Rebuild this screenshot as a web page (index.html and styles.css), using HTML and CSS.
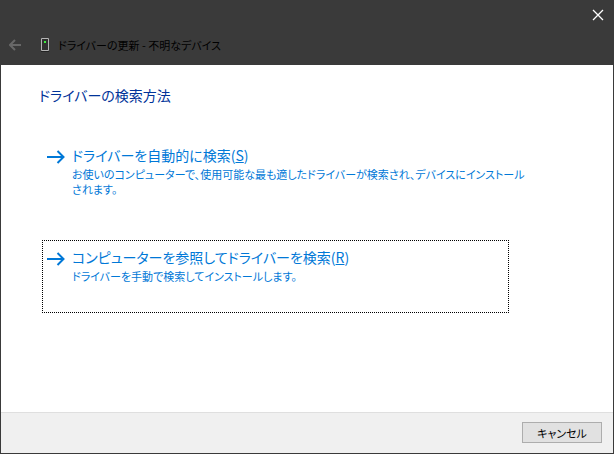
FILE: index.html
```html
<!DOCTYPE html>
<html lang="ja">
<head>
<meta charset="utf-8">
<meta name="viewport" content="width=device-width, initial-scale=1">
<title>ドライバーの更新 - 不明なデバイス</title>
<link rel="stylesheet" href="styles.css">
</head>
<body>
<div class="window">
  <header class="titlebar">
    <div class="caption">
      <button class="close" type="button" aria-label="閉じる">
        <svg width="12" height="12" viewBox="0 0 12 12"><path d="M1 1l10 10M11 1L1 11" fill="none" stroke="#fff" stroke-width="1.3"/></svg>
      </button>
    </div>
    <div class="nav">
      <button class="back" type="button" aria-label="戻る" disabled>
        <svg width="14" height="12" viewBox="0 0 14 12"><path d="M12 6H1.500M6 1L1 6l5 5" fill="none" stroke="#686868" stroke-width="2"/></svg>
      </button>
      <svg class="device" width="8" height="14" viewBox="0 0 8 14"><path d="M.5.5h7v12h-7z" fill="#303030" stroke="#b4b4b4"/><path d="M0 13.500h8" stroke="#222"/><path d="M3 3h2v2H3z" fill="#3cf03c"/></svg>
      <span class="name">ドライバーの更新 - 不明なデバイス</span>
    </div>
  </header>
  <main class="content">
    <h1 class="heading">ドライバーの検索方法</h1>
    <button class="command" type="button" accesskey="s">
      <svg class="arrow" width="18" height="14" viewBox="0 0 18 14"><path d="M0 7h16.500M10.500 1l6 6-6 6" fill="none" stroke="#0078d7" stroke-width="2"/></svg>
      <span class="text">
        <span class="label">ドライバーを自動的に検索(<u>S</u>)</span>
        <span class="note">お使いのコンピューターで、使用可能な最も適したドライバーが検索され、デバイスにインストール<br>されます。</span>
      </span>
    </button>
    <button class="command focused" type="button" accesskey="r">
      <svg class="arrow" width="18" height="14" viewBox="0 0 18 14"><path d="M0 7h16.500M10.500 1l6 6-6 6" fill="none" stroke="#0078d7" stroke-width="2"/></svg>
      <span class="text">
        <span class="label">コンピューターを参照してドライバーを検索(<u>R</u>)</span>
        <span class="note">ドライバーを手動で検索してインストールします。</span>
      </span>
    </button>
  </main>
  <footer class="footer">
    <button class="cancel" type="button">キャンセル</button>
  </footer>
</div>
</body>
</html>
```
FILE: styles.css
```css
* {
  box-sizing: border-box;
}

body {
  margin: 0;
  font-family: "Noto Sans CJK JP", sans-serif;
  font-size: 11px;
  font-feature-settings: "palt";
}

button {
  margin: 0;
  padding: 0;
  border: 0;
  background: none;
  color: inherit;
  font: inherit;
  font-feature-settings: inherit;
}

svg {
  display: block;
  flex: none;
}

.window {
  display: flex;
  flex-direction: column;
  min-height: 100vh;
  border: 1px solid #3a3a3a;
  border-top: 0;
  background: #fff;
}

.titlebar {
  background: #3a3a3a;
}

.caption {
  display: flex;
  justify-content: flex-end;
}

.close {
  display: grid;
  place-items: center;
  width: 30px;
  height: 30px;
}

.nav {
  display: flex;
  align-items: center;
  height: 35px;
  padding: 0 8px 6px;
}

.device {
  margin: 0 9px 0 18px;
}

.name {
  color: #000;
}

.content {
  flex: 1;
  padding: 18px 104px 32px 38px;
}

.heading {
  margin: 0 0 31px;
  color: #003399;
  font-size: 14px;
  font-weight: 400;
  line-height: 24px;
}

.command {
  display: flex;
  gap: 7px;
  width: calc(100% - 3px);
  min-height: 73px;
  margin: 0 0 29px 3px;
  padding: 5px 0 5px 4px;
  border: 1px solid transparent;
  color: #0078d7;
  text-align: left;
}

.focused {
  margin-bottom: 0;
  border: 1px dotted #000;
}

.arrow {
  margin-top: 6px;
}

.label {
  display: block;
  font-size: 14px;
  line-height: 23px;
}

.note {
  display: block;
  line-height: 15px;
  white-space: nowrap;
}

.footer {
  display: flex;
  justify-content: flex-end;
  padding: 9px 11px 10px;
  border-top: 1px solid #dfdfdf;
  background: #f0f0f0;
}

.cancel {
  width: 80px;
  height: 21px;
  border: 1px solid #adadad;
  background: #e1e1e1;
  color: #000;
  line-height: 18px;
}
```
